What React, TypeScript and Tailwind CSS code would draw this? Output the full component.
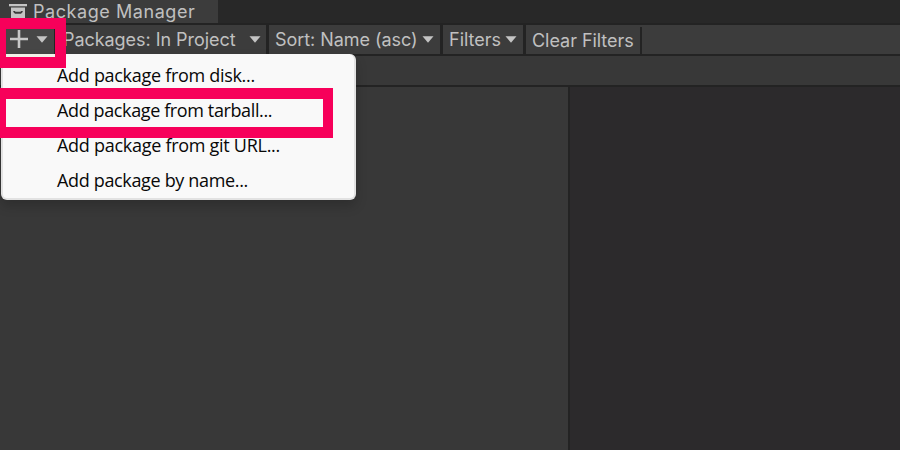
import React from "react";

function Caret({ className = "" }: { className?: string }) {
  return (
    <svg className={`shrink-0 ${className}`} width="12" height="7" viewBox="0 0 12 7">
      <path d="M0.5 0.3h11L6 6.8z" fill="#c4c4c4" />
    </svg>
  );
}

function PackageIcon() {
  return (
    <svg className="shrink-0" width="18" height="15" viewBox="0 0 18 15">
      <path d="M0 0h18v2.300H0z" fill="#c4c4c4" />
      <path fillRule="evenodd" d="M2 3.500h14V15H2zM4.300 7v1l1.700 1.800h6L13.700 8V7h-1.500l-.7.700h-5L5.800 7z" fill="#c4c4c4" />
    </svg>
  );
}

const menuItems = [
  { label: "Add package from disk...", spacing: "tracking-[-0.3px]" },
  { label: "Add package from tarball...", spacing: "tracking-[-0.38px]" },
  { label: "Add package from git URL...", spacing: "tracking-[-0.28px]" },
  { label: "Add package by name...", spacing: "tracking-[-0.34px]" },
];

function AddMenu() {
  return (
    <div className="absolute left-[1px] top-[54px] flex h-[146px] w-[355px] flex-col rounded-[6px] border-b-2 border-l-2 border-r-2 border-[#e2e2e2] bg-[#f9f9f9] pt-[4px] shadow-[0_6px_12px_rgba(0,0,0,0.18)]">
      {menuItems.map((item) => (
        <div
          key={item.label}
          className={`flex h-[35px] shrink-0 items-center whitespace-nowrap pl-[54px] font-['Open_Sans',sans-serif] text-[18px] text-[#080808] ${item.spacing}`}
        >
          {item.label}
        </div>
      ))}
    </div>
  );
}

export default function App() {
  return (
    <div className="relative flex h-[450px] w-[900px] flex-col overflow-hidden bg-[#232323] font-['Inter',sans-serif] text-[18px] text-[#c0c0c0]">
      <header className="flex h-[23px] shrink-0 bg-[#282828]">
        <div className="flex w-[218px] items-center bg-[#3c3c3c] pl-[9px]">
          <PackageIcon />
          <span className="ml-[6px] whitespace-nowrap leading-[24px] tracking-[0.56px]">Package Manager</span>
        </div>
      </header>

      <div className="mt-[2px] flex h-[29px] shrink-0 bg-[#3c3c3c] leading-[29px]">
        <div className="flex w-[55px] shrink-0 items-center border-r border-[#232323] bg-[#464646] pl-[10px]">
          <svg className="mb-px shrink-0" width="18" height="18" viewBox="0 0 18 18">
            <path d="M9 0v18M0 9h18" stroke="#c8c8c8" strokeWidth="2.600" />
          </svg>
          <Caret className="ml-[8px]" />
        </div>
        <div className="flex w-[214px] shrink-0 items-center justify-between border-r-[3px] border-[#232323] pl-[8px] pr-[5px]">
          <span className="whitespace-nowrap tracking-[-0.05px]">Packages: In Project</span>
          <Caret />
        </div>
        <div className="flex w-[174px] shrink-0 items-center justify-between border-r-[3px] border-[#232323] pl-[6px] pr-[6px]">
          <span className="whitespace-nowrap tracking-[-0.05px]">Sort: Name (asc)</span>
          <Caret />
        </div>
        <div className="flex w-[83px] shrink-0 items-center justify-between border-r-[3px] border-[#232323] pl-[6px] pr-[6px]">
          <span className="whitespace-nowrap">Filters</span>
          <Caret />
        </div>
        <div className="mt-[2px] flex h-[27px] w-[116px] shrink-0 items-center border-r-2 border-[#232323] pl-[6px]">
          <span className="whitespace-nowrap tracking-[-0.04px]">Clear Filters</span>
        </div>
      </div>

      <div className="mt-[2px] h-[29px] shrink-0 bg-[#383838]" />

      <main className="mt-[2px] flex flex-1 gap-[2px]">
        <section className="w-[568px] bg-[#383838]" />
        <section className="flex-1 bg-[#2c2a2c]" />
      </main>

      <AddMenu />
      <div className="absolute left-[6px] top-[54px] h-[3px] w-[49px] bg-[#f1f1e8]" />
      <div className="absolute left-0 top-[18px] h-[50px] w-[66px] border-b-[11px] border-l-[6px] border-r-[11px] border-t-[11px] border-[#f7005a]" />
      <div className="absolute left-0 top-[88px] h-[50px] w-[333px] border-b-[11px] border-l-[6px] border-r-[10px] border-t-[11px] border-[#f7005a]" />
    </div>
  );
}
